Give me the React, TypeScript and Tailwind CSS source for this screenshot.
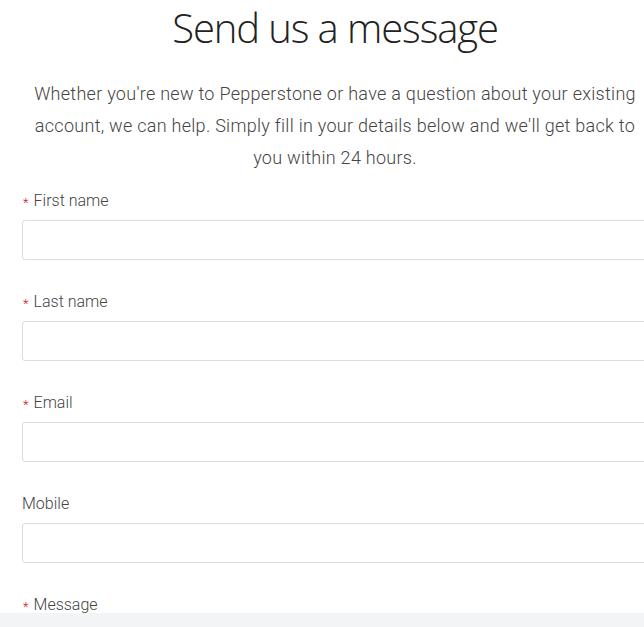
const fields = [
  { label: "First name", required: true },
  { label: "Last name", required: true },
  { label: "Email", required: true },
  { label: "Mobile", required: false },
  { label: "Message", required: true },
];

function Field({ label, required }: { label: string; required: boolean }) {
  return (
    <div className="mb-[32px]">
      <label className="flex items-center h-[20px] mb-[9px] text-[16px] font-light text-[#444]">
        {required && <span className="text-[#c8102e] text-[13px] ml-[1px] mr-[5px] mt-[3px]">*</span>}
        {label}
      </label>
      <div className="h-[40px] w-[640px] rounded-[3px] border border-[#dcdcdc] bg-white" />
    </div>
  );
}

export default function App() {
  return (
    <div className="h-[627px] bg-white font-['Roboto',sans-serif] overflow-hidden">
      <div className="ml-[22px] w-[626px]">
        <h1 className="pt-[4px] text-center text-[40px] leading-[48px] font-light text-[#222] font-['Open_Sans',sans-serif] tracking-[-1.1px]">
          Send us a message
        </h1>
        <p className="mt-[26px] mb-[17px] text-center text-[18px] leading-[32px] font-light text-[#444] tracking-[0.28px]">
          Whether you're new to Pepperstone or have a question about your existing
          account, we can help. Simply fill in your details below and we'll get back to
          you within 24 hours.
        </p>
        {fields.map((f) => (
          <Field key={f.label} {...f} />
        ))}
      </div>
      <div className="fixed bottom-0 left-0 right-0 h-[14px] bg-[#f3f4f6]" />
    </div>
  );
}
